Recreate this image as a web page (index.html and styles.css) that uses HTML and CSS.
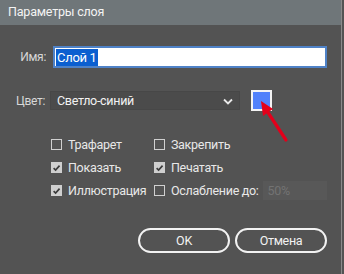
FILE: index.html
```html
<!DOCTYPE html>
<html lang="ru">
<head>
<meta charset="utf-8">
<link rel="stylesheet" href="styles.css">
</head>
<body>
<div class="window">
  <div class="titlebar">Параметры слоя</div>
  <div class="content">
    <div class="row name-row">
      <span class="label">Имя:</span>
      <div class="text-input"><span class="sel">Слой 1</span></div>
    </div>
    <div class="row color-row">
      <span class="label">Цвет:</span>
      <div class="select">
        <span>Светло-синий</span>
        <svg class="chev" width="10" height="7" viewBox="0 0 10 7"><path d="M1 1.5 L5 5.5 L9 1.5" fill="none" stroke="#e8e8e8" stroke-width="1.8"/></svg>
      </div>
      <div class="swatch"></div>
    </div>
    <div class="checks">
      <label class="check"><span class="box"></span>Трафарет</label>
      <label class="check"><span class="box"></span>Закрепить</label>
      <label class="check"><span class="box on"><svg width="10" height="10" viewBox="0 0 10 10"><path d="M1.8 5.2 L4 7.4 L8.4 2.4" fill="none" stroke="#3a3a3a" stroke-width="1.8"/></svg></span>Показать</label>
      <label class="check"><span class="box on"><svg width="10" height="10" viewBox="0 0 10 10"><path d="M1.8 5.2 L4 7.4 L8.4 2.4" fill="none" stroke="#3a3a3a" stroke-width="1.8"/></svg></span>Печатать</label>
      <label class="check"><span class="box on"><svg width="10" height="10" viewBox="0 0 10 10"><path d="M1.8 5.2 L4 7.4 L8.4 2.4" fill="none" stroke="#3a3a3a" stroke-width="1.8"/></svg></span>Иллюстрация</label>
      <label class="check"><span class="box"></span>Ослабление до:<span class="dim-input">50%</span></label>
    </div>
    <div class="buttons">
      <button class="btn">OK</button>
      <button class="btn">Отмена</button>
    </div>
  </div>
  <svg class="arrow" width="40" height="45" viewBox="0 0 40 45">
    <path d="M35 41 L16 12" stroke="#e3001b" stroke-width="3.2" stroke-linecap="round" fill="none"/>
    <path d="M10 2 L22 10 L12 17 Z" fill="#e3001b"/>
  </svg>
</div>
</body>
</html>
```
FILE: styles.css
```css
html, body {
  margin: 0;
  padding: 0;
}
body {
  width: 344px;
  height: 274px;
  background: #535353;
  font-family: Roboto, "Noto Sans", sans-serif;
  font-size: 12px;
  letter-spacing: -0.3px;
  color: #e6e6e6;
  overflow: hidden;
}
.window {
  position: relative;
  width: 341px;
  height: 274px;
  border-right: 1px solid #8b8b8b;
  background: #535353;
  display: flex;
  flex-direction: column;
}
.titlebar {
  height: 25px;
  line-height: 23px;
  background: #6f7679;
  color: #f4f4f4;
  padding-left: 8px;
  font-size: 12.5px;
  letter-spacing: -0.2px;
}
.content {
  display: flex;
  flex-direction: column;
  padding-left: 16px;
}
.row {
  display: flex;
  align-items: center;
}
.label {
  width: 30px;
  text-align: right;
  color: #d8d8d8;
}
.name-row {
  margin-top: 21px;
  height: 22px;
}
.text-input {
  margin-left: 7px;
  width: 270px;
  height: 18px;
  background: #ffffff;
  border: 2px solid #4f82c7;
  display: flex;
  align-items: center;
  box-sizing: content-box;
}
.sel {
  background: #0b5fd0;
  color: #ffffff;
  font-size: 13px;
  line-height: 17px;
  margin-left: 1px;
  padding: 0 1px;
}
.color-row {
  margin-top: 22px;
  height: 21px;
}
.color-row .label { width: 29px; }
.select {
  margin-left: 5px;
  width: 190px;
  height: 19px;
  background: #4b4b4b;
  border: 1px solid #474747;
  display: flex;
  align-items: center;
  justify-content: space-between;
  padding: 0 6px 0 6px;
  box-sizing: border-box;
  font-size: 12.5px;
  color: #f2f2f2;
}
.chev { margin-top: 1px; }
.swatch {
  margin-left: 11px;
  width: 17px;
  height: 17px;
  background: #5181fb;
  border: 2px solid #f4f4f4;
}
.checks {
  margin-top: 25px;
  margin-left: 35px;
  display: grid;
  grid-template-columns: 103px auto;
  row-gap: 6px;
}
.check {
  display: flex;
  align-items: center;
  height: 17px;
  font-size: 12.5px;
  color: #e8e8e8;
  white-space: nowrap;
}
.box {
  width: 9px;
  height: 9px;
  border: 1px solid #d0d0d0;
  margin-right: 6px;
  display: flex;
  align-items: center;
  justify-content: center;
  flex: none;
}
.box.on {
  background: #cfcfcf;
  border-color: #cfcfcf;
}
.dim-input {
  margin-left: 4px;
  width: 59px;
  height: 19px;
  background: #585858;
  color: #737373;
  padding-left: 5px;
  line-height: 19px;
  font-size: 12.5px;
}
.buttons {
  margin-top: 29px;
  display: flex;
  justify-content: flex-end;
  gap: 5px;
  padding-right: 14px;
}
.btn {
  width: 92px;
  height: 25px;
  border: 2px solid #f2f2f2;
  border-radius: 13px;
  background: #535353;
  color: #f2f2f2;
  font-family: Roboto, "Noto Sans", sans-serif;
  font-size: 12.5px;
  letter-spacing: -0.3px;
  padding: 0;
}
.arrow {
  position: absolute;
  left: 251px;
  top: 99px;
}
```
